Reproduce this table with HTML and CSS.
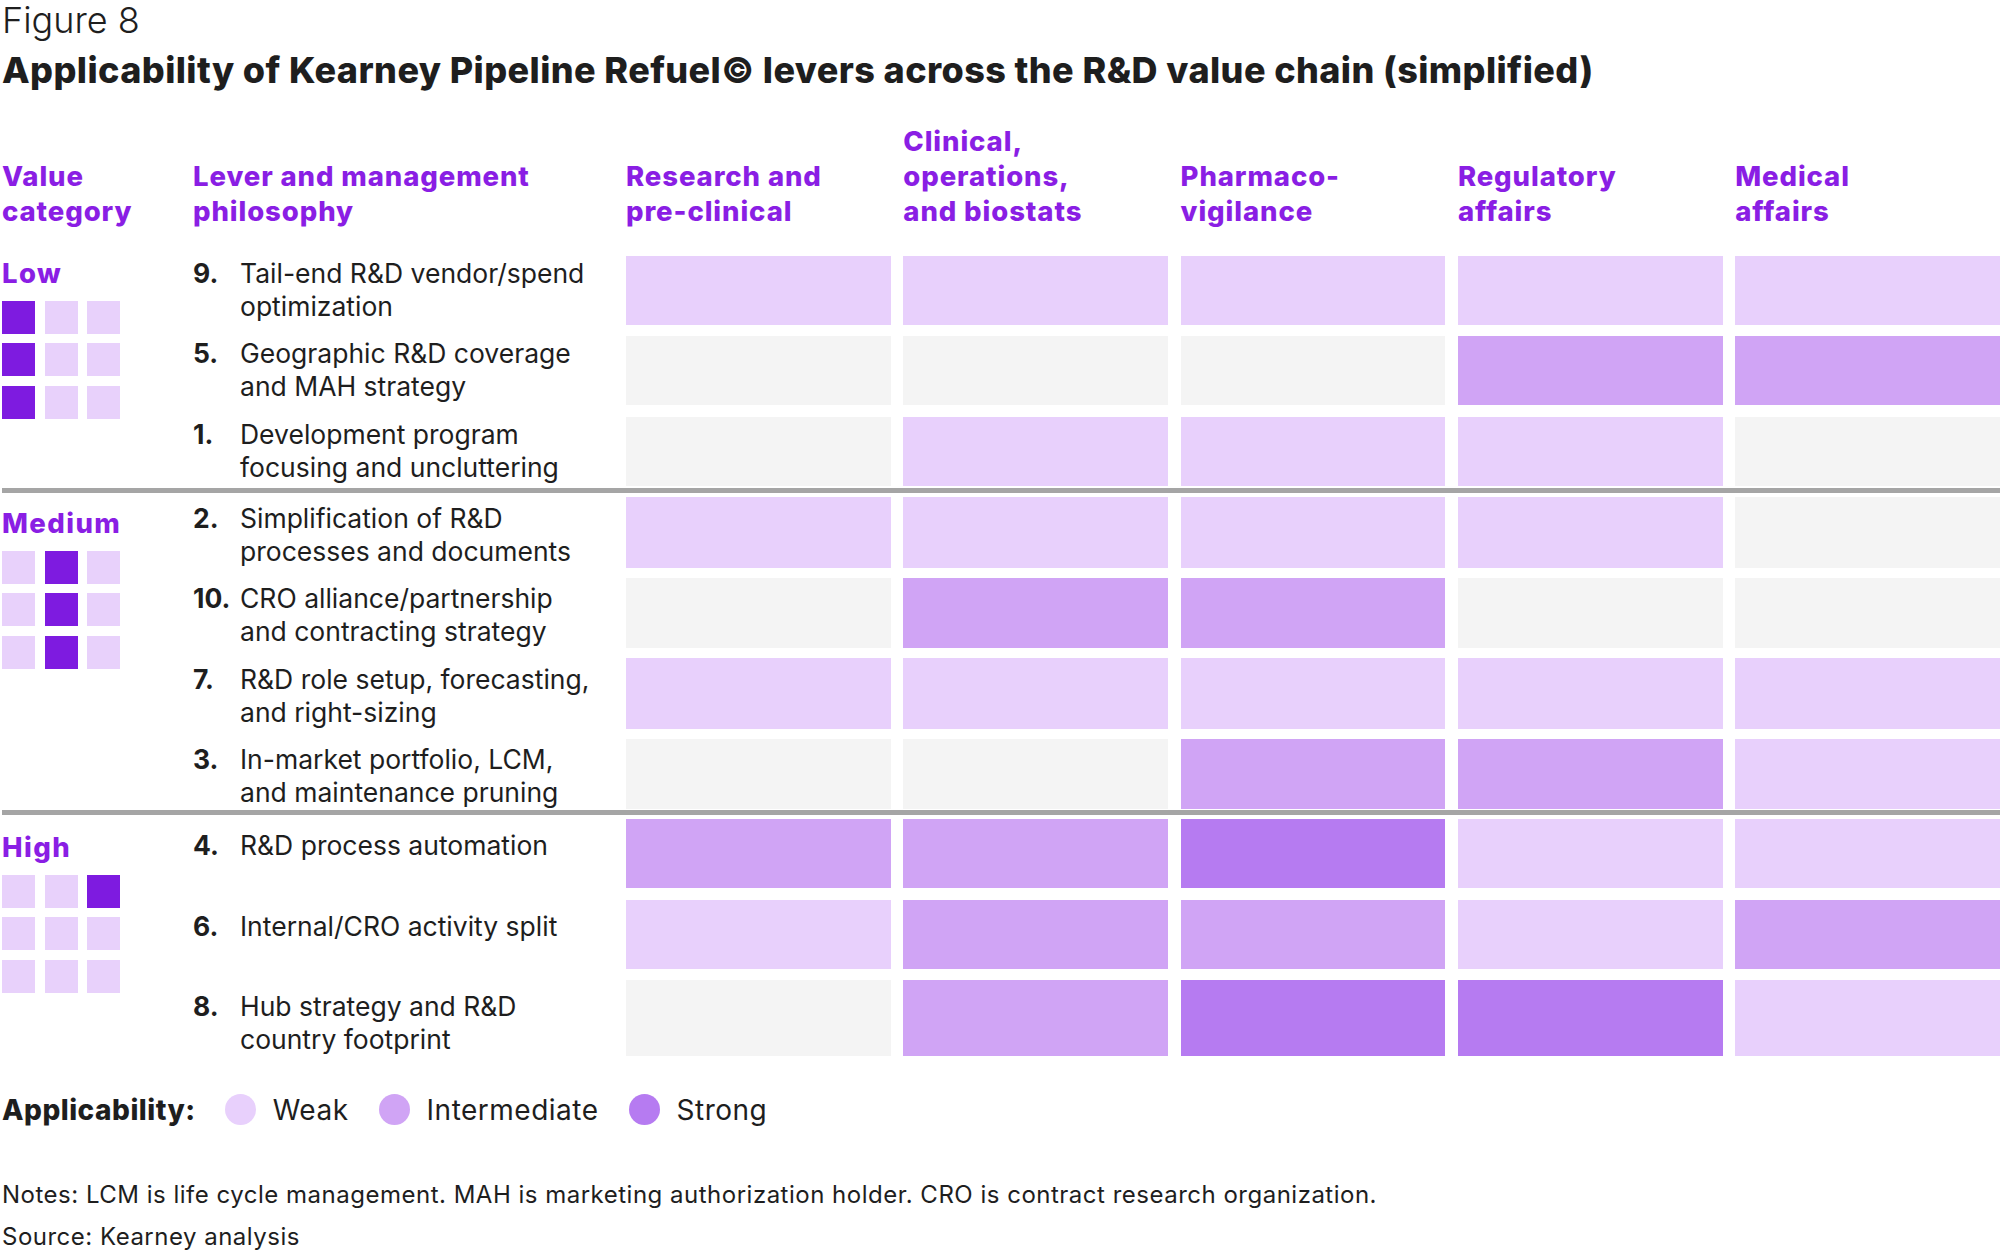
FILE: index.html
```html
<!DOCTYPE html>
<html lang="en">
<head>
  <meta charset="UTF-8">
  <meta name="viewport" content="width=device-width, initial-scale=1.0">
  <title>Figure 8</title>
  <link rel="stylesheet" href="styles.css">
</head>
<body>

<div class="figure-no">Figure 8</div>
<h1 class="title">Applicability of Kearney Pipeline Refuel© levers across the R&amp;D value chain (simplified)</h1>

<div class="chart">
  <div class="head">
    <div class="cat-col">Value<br>category</div>
    <div class="grid">
      <div>Lever and management<br>philosophy</div>
      <div>Research and<br>pre-clinical</div>
      <div>Clinical,<br>operations,<br>and biostats</div>
      <div>Pharmaco-<br>vigilance</div>
      <div>Regulatory<br>affairs</div>
      <div>Medical<br>affairs</div>
    </div>
  </div>

  <section class="group low">
    <div class="cat">
      <div class="cat-name">Low</div>
      <div class="squares">
        <span class="on"></span><span></span><span></span>
        <span class="on"></span><span></span><span></span>
        <span class="on"></span><span></span><span></span>
      </div>
    </div>
    <div class="rows">
      <div class="grid row">
        <div class="lever"><span class="num">9.</span><span>Tail-end R&amp;D vendor/spend<br>optimization</span></div>
        <div class="cell weak"></div><div class="cell weak"></div><div class="cell weak"></div><div class="cell weak"></div><div class="cell weak"></div>
      </div>
      <div class="grid row">
        <div class="lever"><span class="num">5.</span><span>Geographic R&amp;D coverage<br>and MAH strategy</span></div>
        <div class="cell"></div><div class="cell"></div><div class="cell"></div><div class="cell mid"></div><div class="cell mid"></div>
      </div>
      <div class="grid row">
        <div class="lever"><span class="num">1.</span><span>Development program<br>focusing and uncluttering</span></div>
        <div class="cell"></div><div class="cell weak"></div><div class="cell weak"></div><div class="cell weak"></div><div class="cell"></div>
      </div>
    </div>
  </section>

  <section class="group medium">
    <div class="cat">
      <div class="cat-name">Medium</div>
      <div class="squares">
        <span></span><span class="on"></span><span></span>
        <span></span><span class="on"></span><span></span>
        <span></span><span class="on"></span><span></span>
      </div>
    </div>
    <div class="rows">
      <div class="grid row">
        <div class="lever"><span class="num">2.</span><span>Simplification of R&amp;D<br>processes and documents</span></div>
        <div class="cell weak"></div><div class="cell weak"></div><div class="cell weak"></div><div class="cell weak"></div><div class="cell"></div>
      </div>
      <div class="grid row">
        <div class="lever"><span class="num">10.</span><span>CRO alliance/partnership<br>and contracting strategy</span></div>
        <div class="cell"></div><div class="cell mid"></div><div class="cell mid"></div><div class="cell"></div><div class="cell"></div>
      </div>
      <div class="grid row">
        <div class="lever"><span class="num">7.</span><span>R&amp;D role setup, forecasting,<br>and right-sizing</span></div>
        <div class="cell weak"></div><div class="cell weak"></div><div class="cell weak"></div><div class="cell weak"></div><div class="cell weak"></div>
      </div>
      <div class="grid row">
        <div class="lever"><span class="num">3.</span><span>In-market portfolio, LCM,<br>and maintenance pruning</span></div>
        <div class="cell"></div><div class="cell"></div><div class="cell mid"></div><div class="cell mid"></div><div class="cell weak"></div>
      </div>
    </div>
  </section>

  <section class="group high">
    <div class="cat">
      <div class="cat-name">High</div>
      <div class="squares">
        <span></span><span></span><span class="on"></span>
        <span></span><span></span><span></span>
        <span></span><span></span><span></span>
      </div>
    </div>
    <div class="rows">
      <div class="grid row">
        <div class="lever"><span class="num">4.</span><span>R&amp;D process automation</span></div>
        <div class="cell mid"></div><div class="cell mid"></div><div class="cell strong"></div><div class="cell weak"></div><div class="cell weak"></div>
      </div>
      <div class="grid row">
        <div class="lever"><span class="num">6.</span><span>Internal/CRO activity split</span></div>
        <div class="cell weak"></div><div class="cell mid"></div><div class="cell mid"></div><div class="cell weak"></div><div class="cell mid"></div>
      </div>
      <div class="grid row">
        <div class="lever"><span class="num">8.</span><span>Hub strategy and R&amp;D<br>country footprint</span></div>
        <div class="cell"></div><div class="cell mid"></div><div class="cell strong"></div><div class="cell strong"></div><div class="cell weak"></div>
      </div>
    </div>
  </section>
</div>

<div class="legend">
  <b>Applicability:</b>
  <span class="dot weak"></span><span>Weak</span>
  <span class="dot mid"></span><span>Intermediate</span>
  <span class="dot strong"></span><span>Strong</span>
</div>

<p class="notes">Notes: LCM is life cycle management. MAH is marketing authorization holder. CRO is contract research organization.</p>
<p class="notes">Source: Kearney analysis</p>

</body>
</html>
```

FILE: styles.css
```css
html, body {
  margin: 0;
  background: #fff;
}
body {
  padding: 0 0 0 2px;
  font-family: Inter, "Noto Sans", sans-serif;
  color: #1e1e1e;
}
.figure-no {
  font-size: 36px;
  font-weight: 300;
  line-height: 40px;
}
.title {
  margin: 8px 0 0;
  font-size: 36px;
  line-height: 44px;
  font-weight: 800;
  letter-spacing: 0.4px;
}

/* header */
.head {
  display: flex;
  margin: 32px 0 26.5px;
  color: #8a1ee4;
  font-size: 27.5px;
  font-weight: 800;
  line-height: 35px;
  letter-spacing: 0.9px;
}
.head .cat-col {
  width: 191px;
  flex: none;
  align-self: flex-end;
}
.head .grid {
  align-items: end;
}
.grid {
  flex: 1;
  display: grid;
  grid-template-columns: 420.5px repeat(5, 1fr);
  column-gap: 12.5px;
}

/* groups */
.group {
  display: flex;
}
.group + .group {
  margin-top: 2.5px;
  padding-top: 4px;
  border-top: 5px solid #a5a5a5;
}
.cat {
  width: 191px;
  flex: none;
}
.cat-name {
  color: #8a1ee4;
  font-size: 27.5px;
  font-weight: 800;
  line-height: 30px;
  letter-spacing: 1.4px;
}
.squares {
  display: grid;
  grid-template-columns: repeat(3, 33px);
  gap: 9.5px 9.7px;
  margin-top: 13px;
}
.squares span {
  height: 33px;
  background: #e8d1fb;
}
.squares span.on {
  background: #7e1be0;
}
.low .cat { padding-top: 2px; }
.medium .cat { padding-top: 10.5px; }
.high .cat { padding-top: 12.5px; }

.rows {
  flex: 1;
  display: flex;
  flex-direction: column;
  gap: 11.5px;
}
.row {
  flex: none;
  height: 69px;
}
.lever {
  display: flex;
  font-size: 26.5px;
  line-height: 33px;
}
.num {
  width: 47px;
  flex: none;
  font-weight: 700;
}
.low .lever { padding-top: 1.2px; }
.medium .lever { padding-top: 4.7px; }
.high .lever { padding-top: 10.2px; }

.cell { background: #f4f4f4; }
.weak { background: #e8d0fc; }
.mid { background: #d0a4f5; }
.strong { background: #b67bf1; }

/* legend */
.legend {
  display: flex;
  align-items: center;
  margin-top: 43.5px;
  font-size: 28px;
  line-height: 34px;
  letter-spacing: 0.5px;
}
.legend b {
  font-weight: 800;
  margin-right: 29px;
}
.dot {
  width: 31px;
  height: 31px;
  border-radius: 50%;
  margin-right: 17px;
}
.dot + span {
  margin-right: 30px;
}
.notes {
  margin: 0;
  font-size: 24px;
  line-height: 42px;
  letter-spacing: 0.5px;
}
.legend + .notes {
  margin-top: 47.5px;
}
```
